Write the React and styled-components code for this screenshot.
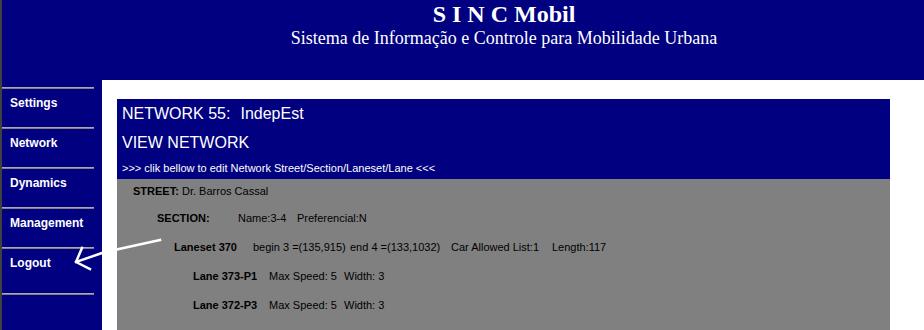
import React from 'react';
import styled, { createGlobalStyle } from 'styled-components';

const GlobalStyle = createGlobalStyle`
  html, body {
    margin: 0;
    padding: 0;
    overflow: hidden;
    background: #000080;
  }
`;

const Page = styled.div`
  position: relative;
  display: flex;
  flex-direction: column;
  height: 100vh;
  background: #000080;
  border-left: 2px solid #404040;
  font-family: "Liberation Sans", Arial, sans-serif;
`;

const Header = styled.header`
  height: 80px;
  box-sizing: border-box;
  padding: 1px 18px 0 100px;
  text-align: center;
  color: #fff;
  font-family: "Liberation Serif", "Times New Roman", serif;
`;

const Title = styled.h1`
  margin: 0;
  font-size: 24px;
  line-height: 27px;
  font-weight: bold;
`;

const Subtitle = styled.div`
  font-size: 18px;
  line-height: 20px;
`;

const Body = styled.div`
  flex: 1;
  display: flex;
  min-height: 0;
`;

const Sidebar = styled.nav`
  width: 100px;
  flex-shrink: 0;
  padding-top: 7px;
`;

const Separator = styled.div`
  width: 92px;
  height: 1px;
  border-top: 1px solid #a8a8a8;
  background: #808080;
`;

const MenuItem = styled.a`
  display: block;
  height: ${props => props.$h || 38}px;
  box-sizing: border-box;
  padding: 7px 0 0 8px;
  color: #fff;
  font-size: 12px;
  line-height: 14px;
  font-weight: bold;
  text-decoration: none;
  cursor: pointer;
`;

const Content = styled.main`
  flex: 1;
  background: #fff;
  padding: 19px 34px 0 15px;
  overflow: hidden;
`;

const Panel = styled.section`
  background: #000080;
  color: #fff;
`;

const PanelRow = styled.div`
  height: ${props => props.$h}px;
  display: flex;
  align-items: center;
  padding-left: 5px;
  font-size: ${props => props.$size}px;
  white-space: nowrap;
`;

const Spacer = styled.span`
  display: inline-block;
  width: ${props => props.$w}px;
`;

const Tree = styled.div`
  background: #808080;
  color: #000;
  font-size: 11px;
  padding-bottom: 20px;
`;

const Row = styled.div`
  height: ${props => props.$h || 29}px;
  display: flex;
  align-items: center;
  padding-left: ${props => props.$indent}px;
  white-space: nowrap;
`;

const Cell = styled.span`
  display: inline-block;
  width: ${props => (props.$w ? `${props.$w}px` : 'auto')};
  font-weight: ${props => (props.$bold ? 'bold' : 'normal')};
`;

const Arrow = styled.svg`
  position: absolute;
  left: 0;
  top: 0;
  pointer-events: none;
`;

const menu = ['Settings', 'Network', 'Dynamics', 'Management', 'Logout'];

const App = () => {
  return (
    <Page>
      <GlobalStyle />
      <Header>
        <Title>S I N C Mobil</Title>
        <Subtitle>Sistema de Informação e Controle para Mobilidade Urbana</Subtitle>
      </Header>
      <Body>
        <Sidebar>
          {menu.map((item, i) => (
            <React.Fragment key={item}>
              <Separator />
              <MenuItem $h={i === menu.length - 1 ? 44 : 38}>{item}</MenuItem>
            </React.Fragment>
          ))}
          <Separator />
        </Sidebar>
        <Content>
          <Panel>
            <PanelRow $h={29} $size={16}>
              NETWORK 55:<Spacer $w={10} />IndepEst
            </PanelRow>
            <PanelRow $h={29} $size={16}>VIEW NETWORK</PanelRow>
            <PanelRow $h={22} $size={11}>
              &gt;&gt;&gt; clik bellow to edit Network Street/Section/Laneset/Lane &lt;&lt;&lt;
            </PanelRow>
          </Panel>
          <Tree>
            <Row $indent={16} $h={24}>
              <Cell $w={49} $bold>STREET:</Cell>
              <Cell>Dr. Barros Cassal</Cell>
            </Row>
            <Row $indent={40}>
              <Cell $w={81} $bold>SECTION:</Cell>
              <Cell $w={59}>Name:3-4</Cell>
              <Cell>Preferencial:N</Cell>
            </Row>
            <Row $indent={57}>
              <Cell $w={79} $bold>Laneset 370</Cell>
              <Cell $w={97}>begin 3 =(135,915)</Cell>
              <Cell $w={101}>end 4 =(133,1032)</Cell>
              <Cell $w={101}>Car Allowed List:1</Cell>
              <Cell>Length:117</Cell>
            </Row>
            <Row $indent={76}>
              <Cell $w={76} $bold>Lane 373-P1</Cell>
              <Cell $w={75}>Max Speed: 5</Cell>
              <Cell>Width: 3</Cell>
            </Row>
            <Row $indent={76}>
              <Cell $w={76} $bold>Lane 372-P3</Cell>
              <Cell $w={75}>Max Speed: 5</Cell>
              <Cell>Width: 3</Cell>
            </Row>
            <Row $indent={40}>
              <Cell $w={81} $bold>SECTION:</Cell>
              <Cell $w={59}>Name:4-5</Cell>
              <Cell>Preferencial:N</Cell>
            </Row>
          </Tree>
        </Content>
      </Body>
      <Arrow width="200" height="300" viewBox="0 0 200 300">
        <g fill="none" stroke="#fff" strokeWidth="2.5" strokeLinecap="square" strokeLinejoin="round">
          <path d="M158 240 L117 249 L100 253 L74 262" />
          <path d="M80 248 L74 262 L88 269" />
        </g>
      </Arrow>
    </Page>
  );
};

export default App;
